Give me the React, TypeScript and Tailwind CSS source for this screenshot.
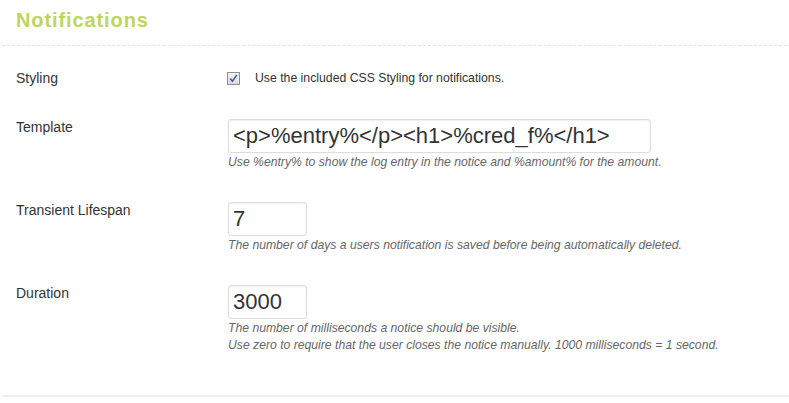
export default function App() {
  return (
    <div className="w-[789px] h-[403px] bg-white text-[#333] font-['Liberation_Sans',Arial,sans-serif] overflow-hidden">
      <div className="mx-[2px] pt-[8px] pb-[13px] border-b border-dashed border-[#e2e2e2]">
        <h2 className="pl-[14px] text-[20px] leading-[24px] font-bold tracking-[0.9px] text-[#bcd65f]">
          Notifications
        </h2>
      </div>

      <div className="pl-[16px] pt-[22px] flex flex-col gap-[29px]">
        <SettingRow label="Styling">
          <div className="flex items-start">
            <span className="mt-[4px] ml-[-1px] w-[13px] h-[13px] border border-[#8f8f8f] bg-gradient-to-b from-[#f4f4f4] to-[#dcdcdc] flex items-center justify-center">
              <svg width="9" height="9" viewBox="0 0 9 9">
                <path d="M1.2 4.6 L3.4 7.3 L7.9 0.9" fill="none" stroke="#3b5ea8" strokeWidth="1.6" />
              </svg>
            </span>
            <span className="ml-[15px] text-[12.25px] leading-[20px] text-[#333]">
              Use the included CSS Styling for notifications.
            </span>
          </div>
        </SettingRow>

        <SettingRow label="Template">
          <Field value="<p>%entry%</p><h1>%cred_f%</h1>" width="w-[423px]" />
          <Help lines={["Use %entry% to show the log entry in the notice and %amount% for the amount."]} />
        </SettingRow>

        <SettingRow label="Transient Lifespan">
          <Field value="7" width="w-[79px]" />
          <Help lines={["The number of days a users notification is saved before being automatically deleted."]} />
        </SettingRow>

        <SettingRow label="Duration">
          <Field value="3000" width="w-[79px]" />
          <Help
            lines={[
              "The number of milliseconds a notice should be visible.",
              "Use zero to require that the user closes the notice manually. 1000 milliseconds = 1 second.",
            ]}
          />
        </SettingRow>
      </div>

      <div className="mt-[41px] ml-[3px] h-[2px] bg-[#eeeeee]" />
    </div>
  );
}

function SettingRow({ label, children }: { label: string; children: React.ReactNode }) {
  return (
    <div className="flex">
      <div className="w-[212px] shrink-0 text-[14px] leading-[20px] text-[#333]">{label}</div>
      <div className="flex flex-col">{children}</div>
    </div>
  );
}

function Field({ value, width }: { value: string; width: string }) {
  return (
    <input
      readOnly
      value={value}
      className={`${width} mt-[2px] h-[34px] px-[4px] border border-[#dddddd] rounded-[3px] bg-white shadow-[inset_0_1px_2px_rgba(0,0,0,0.07)] text-[22px] text-[#333] font-['Liberation_Sans',Arial,sans-serif] outline-none`}
    />
  );
}

function Help({ lines }: { lines: string[] }) {
  return (
    <div className="mt-px text-[12.2px] leading-[17px] italic text-[#666]">
      {lines.map((l) => (
        <div key={l}>{l}</div>
      ))}
    </div>
  );
}
